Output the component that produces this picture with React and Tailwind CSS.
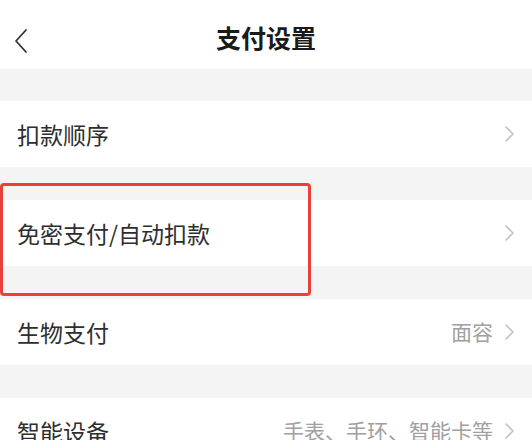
import React from "react";

function Chevron({ className = "" }) {
  return (
    <svg width="11" height="18" viewBox="0 0 11 18" className={className} fill="none">
      <path d="M2 2 L9 9 L2 16" stroke="#c2c2c2" strokeWidth="1.6" strokeLinecap="round" strokeLinejoin="round" />
    </svg>
  );
}

function Row({ label, value }) {
  return (
    <div className="flex h-[66px] items-center bg-white pl-[17px] pr-[17px]">
      <span className="flex-1 text-[23px] text-[#2e2e2e]">{label}</span>
      {value && <span className="mr-[11px] text-[21px] text-[#a0a0a0]">{value}</span>}
      <Chevron />
    </div>
  );
}

export default function App() {
  return (
    <div
      className="relative h-[440px] w-[532px] overflow-hidden bg-[#f4f4f4]"
      style={{ fontFamily: '"Noto Sans CJK SC", "Noto Sans", sans-serif' }}
    >
      <div className="relative flex h-[69px] items-center justify-center bg-white pt-[6px]">
        <svg width="16" height="26" viewBox="0 0 16 26" className="absolute left-[13px] top-[28px]" fill="none">
          <path d="M13 2 L3 13 L13 24" stroke="#333" strokeWidth="1.8" strokeLinecap="round" strokeLinejoin="round" />
        </svg>
        <span className="text-[25px] font-bold text-[#1a1a1a]">支付设置</span>
      </div>
      <div className="h-[32px]" />
      <Row label="扣款顺序" />
      <div className="h-[33px]" />
      <Row label="免密支付/自动扣款" />
      <div className="h-[33px]" />
      <Row label="生物支付" value="面容" />
      <div className="h-[33px]" />
      <Row label="智能设备" value="手表、手环、智能卡等" />
      <div className="pointer-events-none absolute left-0 top-[183px] h-[113px] w-[311px] rounded-[4px] border-[3px] border-[#e8413b]" />
    </div>
  );
}
